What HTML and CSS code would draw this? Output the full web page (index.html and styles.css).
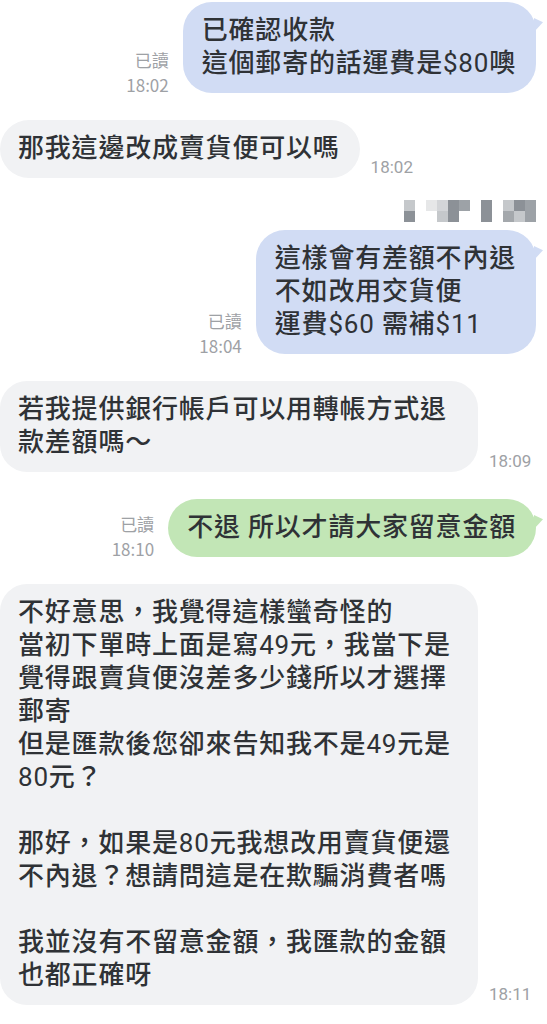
FILE: index.html
```html
<!DOCTYPE html>
<html lang="zh-Hant">
<head>
    <meta charset="UTF-8">
    <meta name="viewport" content="width=device-width, initial-scale=1.0">
    <title>聊天紀錄</title>
    <link rel="stylesheet" href="styles.css">
</head>
<body>
    <div class="chat">
        <div class="row out">
            <div class="meta">
                <span>已讀</span>
                <span class="time">18:02</span>
            </div>
            <div class="bubble blue">已確認收款<br>這個郵寄的話運費是<span class="num">$80</span>噢</div>
        </div>

        <div class="row in">
            <div class="bubble gray">那我這邊改成賣貨便可以嗎</div>
            <span class="time">18:02</span>
        </div>

        <div class="group">
            <!-- blurred name, two rows of pixel cells -->
            <div class="blurred">
                <i class="p3"></i><i></i><i class="p1"></i><i class="p2"></i><i class="p6"></i><i class="p5"></i><i></i><i class="p6"></i><i></i><i class="p3"></i><i class="p6"></i><i class="p5"></i>
                <i class="p6"></i><i></i><i></i><i class="p3"></i><i class="p6"></i><i></i><i></i><i class="p6"></i><i></i><i class="p4"></i><i class="p3"></i><i class="p5"></i>
            </div>
            <div class="row out">
                <div class="meta">
                    <span>已讀</span>
                    <span class="time">18:04</span>
                </div>
                <div class="bubble blue">這樣會有差額不內退<br>不如改用交貨便<br>運費<span class="num">$60</span> 需補<span class="num">$11</span></div>
            </div>
        </div>

        <div class="row in">
            <div class="bubble gray wide">若我提供銀行帳戶可以用轉帳方式退<br>款差額嗎～</div>
            <span class="time">18:09</span>
        </div>

        <div class="row out">
            <div class="meta">
                <span>已讀</span>
                <span class="time">18:10</span>
            </div>
            <div class="bubble green">不退 所以才請大家留意金額</div>
        </div>

        <div class="row in">
            <div class="bubble gray wide">不好意思，我覺得這樣蠻奇怪的<br>當初下單時上面是寫<span class="num">49</span>元，我當下是<br>覺得跟賣貨便沒差多少錢所以才選擇<br>郵寄<br>但是匯款後您卻來告知我不是<span class="num">49</span>元是<br><span class="num">80</span>元？<br><br>那好，如果是<span class="num">80</span>元我想改用賣貨便還<br>不內退？想請問這是在欺騙消費者嗎<br><br>我並沒有不留意金額，我匯款的金額<br>也都正確呀</div>
            <span class="time">18:11</span>
        </div>
    </div>
</body>
</html>
```

FILE: styles.css
```css
body{
    margin: 0;
    background: #ffffff;
    font-family: Roboto, "Noto Sans CJK TC", sans-serif;
}
.chat{
    display: flex;
    flex-direction: column;
    gap: 27px;
    padding: 2px 11px 0 0;
}
.row{
    display: flex;
    align-items: flex-end;
}
.row.out{
    justify-content: flex-end;
    gap: 14px;
}
.row.in{
    gap: 11px;
}
.group{
    display: flex;
    flex-direction: column;
    gap: 8px;
    margin-top: -5px;
}
.meta{
    display: flex;
    flex-direction: column;
    align-items: flex-end;
    margin-bottom: -4px;
}
.meta span, .time{
    font-size: 17px;
    line-height: 25px;
    color: #9ea1a5;
    font-family: "Noto Sans CJK TC", sans-serif;
}
.time{
    font-family: Roboto, sans-serif;
}
.row.in>.time{
    margin-bottom: -2px;
}
.bubble{
    position: relative;
    padding: 12px 20px 13px 19px;
    border-radius: 29px;
    font-size: 26px;
    font-weight: 500;
    line-height: 33px;
    letter-spacing: 0.8px;
    color: #2f3236;
    white-space: nowrap;
}
.bubble .num{
    font-weight: 400;
}
.bubble.gray{
    background: #f1f2f4;
    padding-left: 18px;
}
.bubble.wide{
    width: 478px;
    box-sizing: border-box;
    border-radius: 27px;
}
.bubble.blue{
    background: #d1dcf4;
}
.bubble.green{
    background: #c2e6b6;
}
.bubble.blue::after, .bubble.green::after{
    content: "";
    position: absolute;
    top: 16px;
    right: -7px;
    width: 9px;
    height: 14px;
    background: inherit;
    clip-path: polygon(0 0, 100% 30%, 0 100%);
}
.blurred{
    display: grid;
    grid-template-columns: repeat(12, 11px);
    grid-auto-rows: 11px;
    justify-content: end;
}
.blurred i{
    display: block;
}
.p1{ background: #e6e7e8; }
.p2{ background: #d3d5d8; }
.p3{ background: #c5c8cb; }
.p4{ background: #a4a8ac; }
.p5{ background: #9da2a7; }
.p6{ background: #8c9197; }
```
